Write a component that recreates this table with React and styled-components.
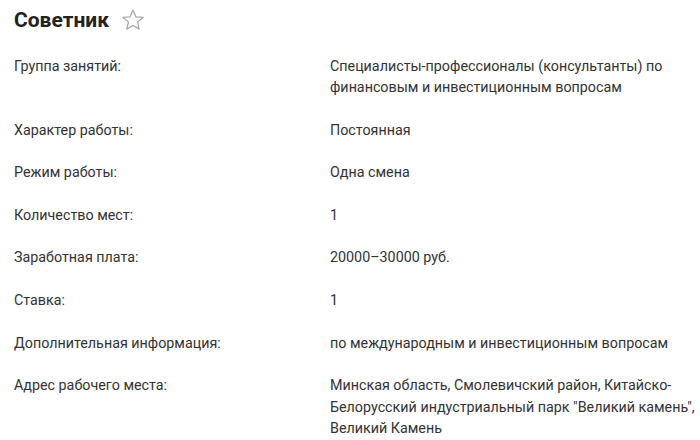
import React from 'react'
import styled, { createGlobalStyle } from 'styled-components'

const GlobalStyle = createGlobalStyle`
  body {
    margin: 0;
    background: #fff;
    font-family: Roboto, "Liberation Sans", sans-serif;
    color: #333;
  }
`

const Page = styled.div`
  padding: 0 0 0 14px;
`

const Header = styled.div`
  display: flex;
  align-items: center;
  gap: 12px;
  height: 40px;
  margin-bottom: 5px;
`

const Title = styled.h1`
  margin: 0;
  font-family: Roboto, "Liberation Sans", sans-serif;
  font-size: 21px;
  font-weight: 700;
  color: #222;
`

const StarButton = styled.span`
  display: flex;
  width: 24px;
  height: 24px;
`

const Table = styled.div`
  display: grid;
  grid-template-columns: 316px 1fr;
`

const Cell = styled.div`
  font-size: 14.3px;
  line-height: 21.4px;
  padding: 10.6px 0;
`

const rows = [
  ['Группа занятий:', 'Специалисты-профессионалы (консультанты) по финансовым и инвестиционным вопросам'],
  ['Характер работы:', 'Постоянная'],
  ['Режим работы:', 'Одна смена'],
  ['Количество мест:', '1'],
  ['Заработная плата:', '20000–30000 руб.'],
  ['Ставка:', '1'],
  ['Дополнительная информация:', 'по международным и инвестиционным вопросам'],
  ['Адрес рабочего места:', 'Минская область, Смолевичский район, Китайско-Белорусский индустриальный парк "Великий камень", Великий Камень'],
]

const Star = () => (
  <svg width="24" height="24" viewBox="0 0 24 24" fill="none" stroke="#aaa" strokeWidth="1.3" strokeLinejoin="round">
    <path d="M12 2.2l2.9 6.6 7.1.6-5.4 4.7 1.6 7-6.2-3.7-6.2 3.7 1.6-7L2 9.4l7.1-.6z" />
  </svg>
)

export default function App() {
  return (
    <>
      <GlobalStyle />
      <Page>
        <Header>
          <Title>Советник</Title>
          <StarButton>
            <Star />
          </StarButton>
        </Header>
        <Table>
          {rows.map(([label, value]) => (
            <React.Fragment key={label}>
              <Cell>{label}</Cell>
              <Cell>{value}</Cell>
            </React.Fragment>
          ))}
        </Table>
      </Page>
    </>
  )
}
